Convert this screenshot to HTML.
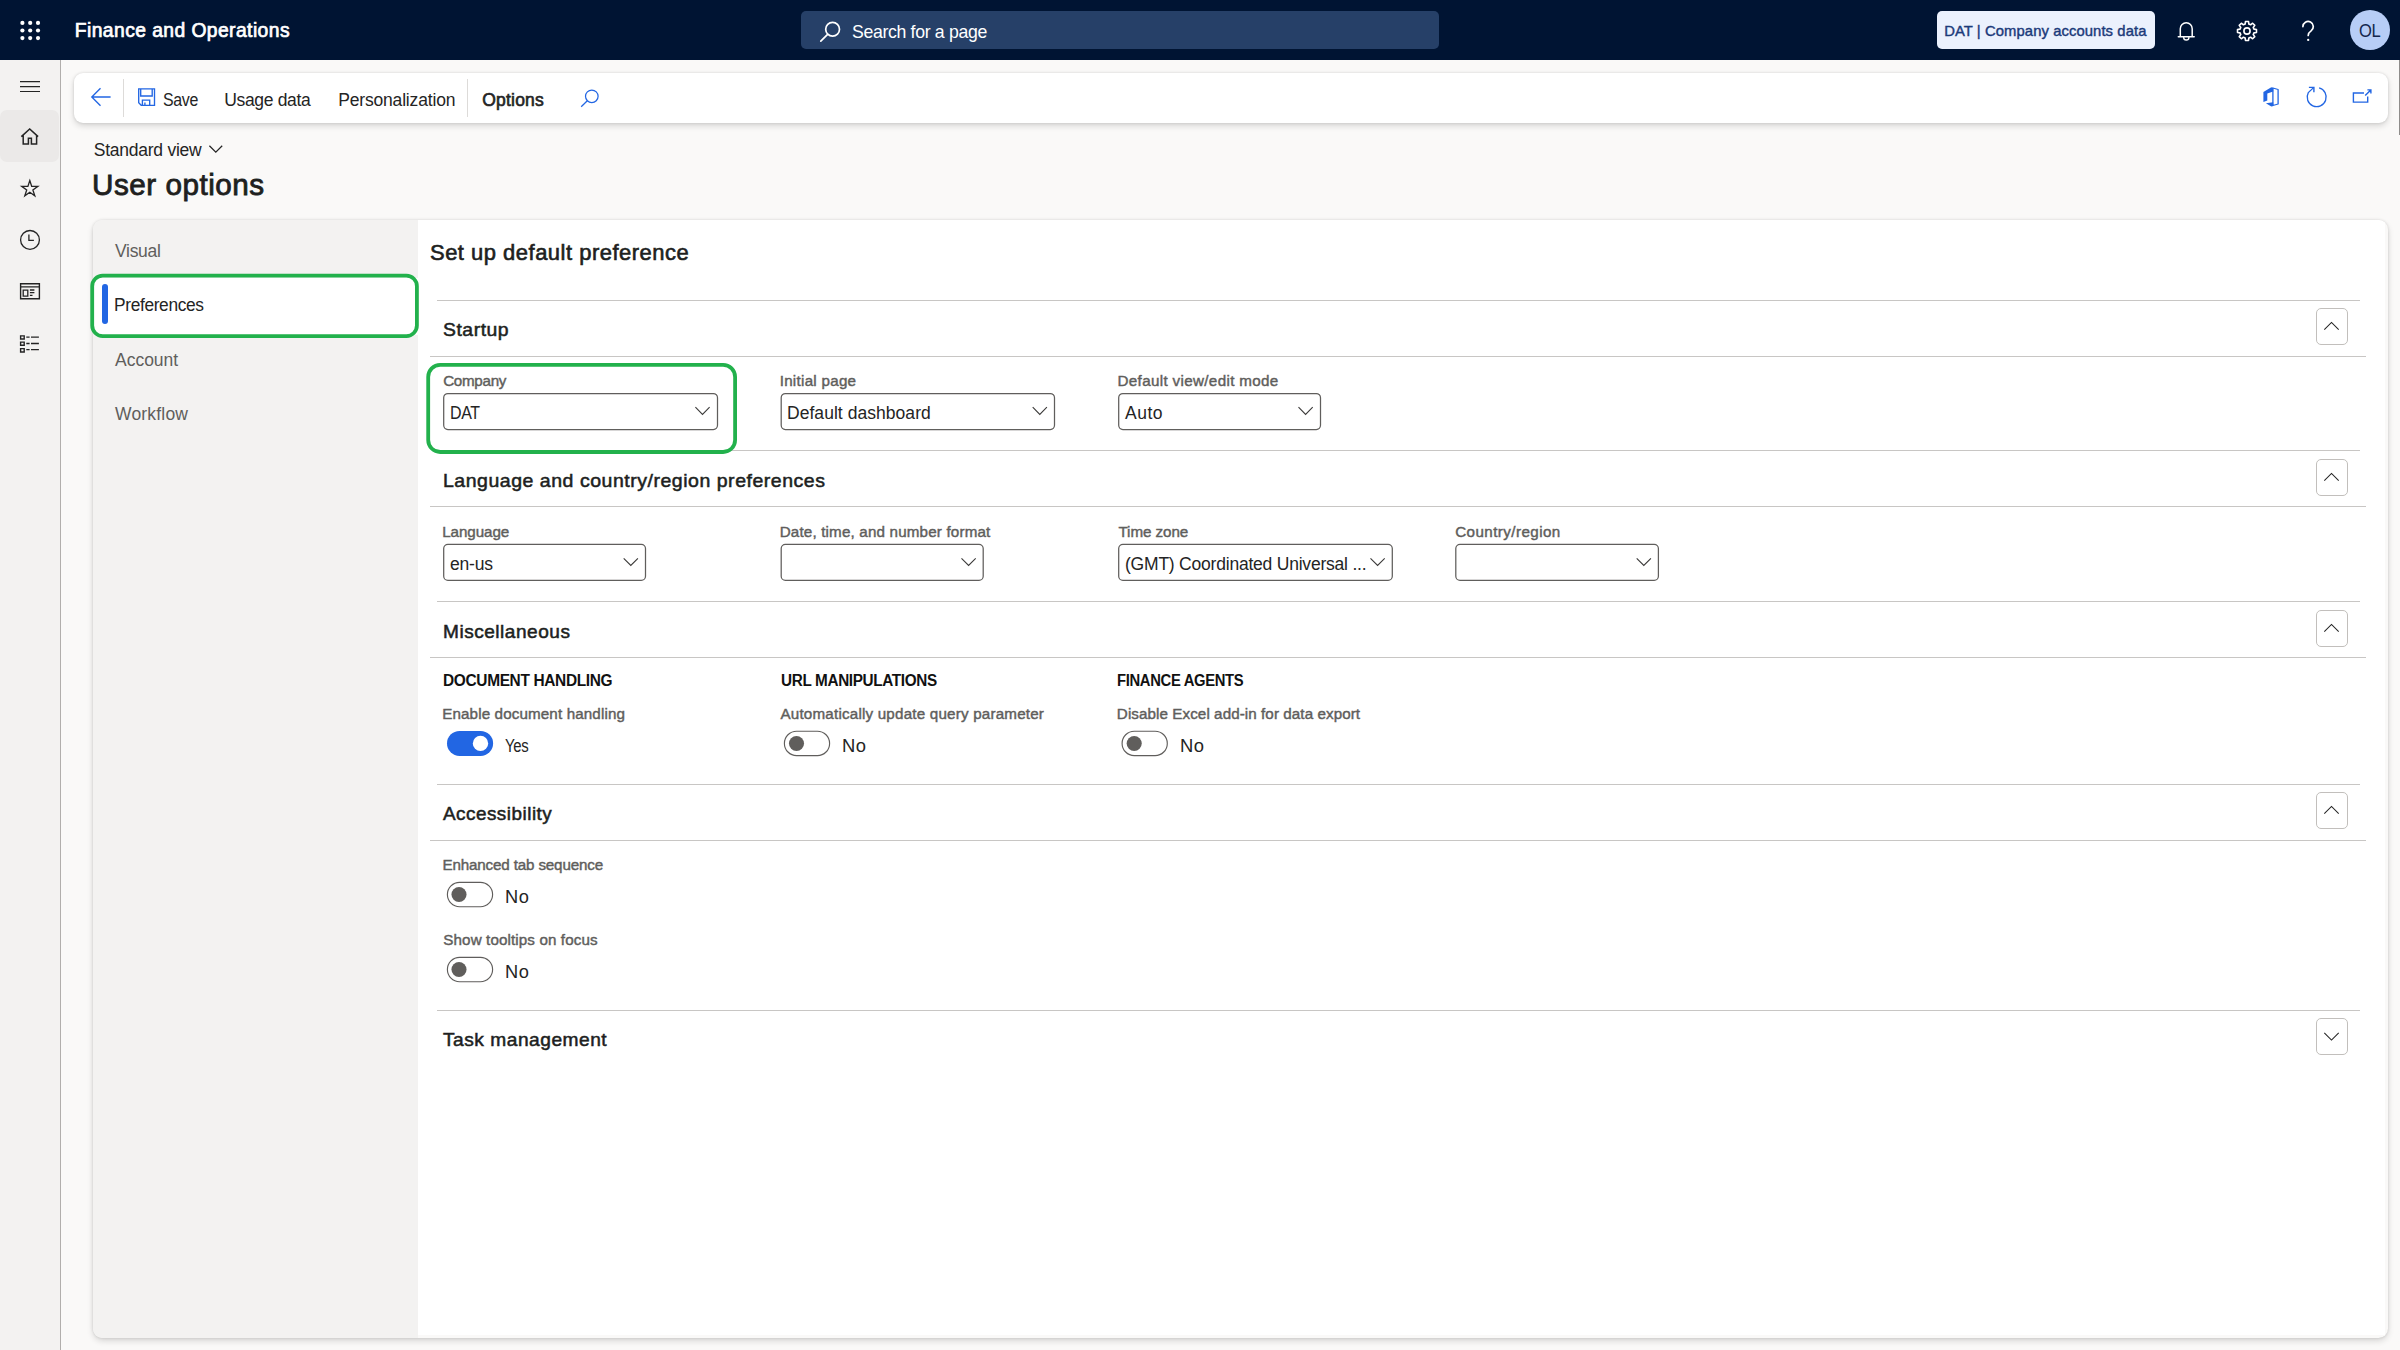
<!DOCTYPE html>
<html lang="en"><head><meta charset="utf-8"><title>User options</title>
<style>
html,body{margin:0;padding:0;}
body{width:2400px;height:1350px;overflow:hidden;position:relative;background:#faf9f8;font-family:"Liberation Sans",sans-serif;}
.t{position:absolute;transform-origin:0 0;white-space:nowrap;line-height:1;font-weight:400;}
.a{position:absolute;box-sizing:border-box;}
svg{position:absolute;overflow:visible;}
.hl{position:absolute;box-sizing:border-box;height:1px;background:#c8c6c4;}
.cbtn{position:absolute;box-sizing:border-box;left:2316px;width:32px;height:37px;border:1px solid #c2bfbc;border-radius:5px;background:#fff;}

</style></head><body>
<!-- ===== top bar ===== -->
<div class="a" style="left:0;top:0;width:2400px;height:60px;background:#001433;"></div>
<svg style="left:0;top:0" width="60" height="60" viewBox="0 0 60 60"><g fill="#fff">
<circle cx="22.4" cy="22.9" r="2.1"/><circle cx="30.2" cy="22.9" r="2.1"/><circle cx="38" cy="22.9" r="2.1"/>
<circle cx="22.4" cy="30.5" r="2.1"/><circle cx="30.2" cy="30.5" r="2.1"/><circle cx="38" cy="30.5" r="2.1"/>
<circle cx="22.4" cy="38.1" r="2.1"/><circle cx="30.2" cy="38.1" r="2.1"/><circle cx="38" cy="38.1" r="2.1"/></g></svg>
<div class="a" style="left:801px;top:11px;width:638px;height:38px;background:#264068;border-radius:5px;"></div>
<svg style="left:818px;top:20px" width="24" height="24" viewBox="818 20 24 24"><g fill="none" stroke="#fff" stroke-width="1.7" stroke-linecap="round">
<circle cx="832.6" cy="29.3" r="6.9"/><path d="M827.6 34.4 L820.8 41.2"/></g></svg>
<div class="a" style="left:1937px;top:11px;width:218px;height:38px;background:#ebf1fd;border-radius:5px;"></div>
<!-- bell -->
<svg style="left:2174px;top:18px" width="24" height="26" viewBox="2174 18 24 26"><g fill="none" stroke="#fff" stroke-width="1.7" stroke-linejoin="round" stroke-linecap="round">
<path d="M2180.3 36.7 V28.7 a5.95 5.95 0 0 1 11.9 0 V36.7 M2178.3 36.8 H2194.2" stroke-width="1.5"/><path d="M2183.7 37.4 a2.6 2.6 0 0 0 5.2 0" stroke-width="1.4"/></g></svg>
<!-- gear -->
<svg style="left:2235px;top:19px" width="24" height="24" viewBox="-12 -12 24 24"><g fill="none" stroke="#fff" stroke-width="1.6" stroke-linejoin="round">
<circle cx="0" cy="0" r="3.1"/>
<path d="M6.96 -1.85 L9.48 -1.53 L9.48 1.53 L6.96 1.85 L6.23 3.61 L7.78 5.62 L5.62 7.78 L3.61 6.23 L1.85 6.96 L1.53 9.48 L-1.53 9.48 L-1.85 6.96 L-3.61 6.23 L-5.62 7.78 L-7.78 5.62 L-6.23 3.61 L-6.96 1.85 L-9.48 1.53 L-9.48 -1.53 L-6.96 -1.85 L-6.23 -3.61 L-7.78 -5.62 L-5.62 -7.78 L-3.61 -6.23 L-1.85 -6.96 L-1.53 -9.48 L1.53 -9.48 L1.85 -6.96 L3.61 -6.23 L5.62 -7.78 L7.78 -5.62 L6.23 -3.61 Z"/></g></svg>
<!-- question -->
<svg style="left:2298px;top:18px" width="20" height="26" viewBox="2298 18 20 26"><g fill="none" stroke="#fff" stroke-width="1.7" stroke-linecap="round">
<path d="M2302.9 26.6 a5.2 5.2 0 1 1 8.2 4.3 c-2 1.4 -2.9 2.3 -2.9 4.6"/></g><circle cx="2308.2" cy="39.9" r="1.15" fill="#fff"/></svg>
<div class="a" style="left:2350px;top:10px;width:40px;height:40px;border-radius:50%;background:#b7cdf6;"></div>

<!-- scroll sliver -->
<div class="a" style="left:2398.6px;top:60px;width:1.4px;height:75px;background:#8f8d8b;"></div>
<!-- ===== left rail ===== -->
<div class="a" style="left:0;top:60px;width:61px;height:1290px;background:#f3f2f1;border-right:1px solid #b1aeac;"></div>
<div class="a" style="left:0;top:110px;width:59px;height:52px;background:#ebe9e8;border-radius:7px;"></div>
<svg style="left:0;top:60px" width="60" height="320" viewBox="0 60 60 320"><g fill="none" stroke="#242424" stroke-width="1.5" stroke-linejoin="miter">
<path d="M20 81.7H40M20 86.6H40M20 91.5H40" stroke-width="1.2"/>
<!-- home -->
<path d="M21.3 136.6 L29.7 128.9 L38.1 136.6 M23.2 135.4 V144 H28.4 V138.2 H31.4 V144 H36.6 V135.4" stroke-width="1.5"/>
<!-- star -->
<path d="M29.80 180.50 L31.71 186.37 L37.88 186.37 L32.89 190.00 L34.80 195.88 L29.80 192.25 L24.80 195.88 L26.71 190.00 L21.72 186.37 L27.89 186.37 Z" stroke-width="1.3"/>
<!-- clock -->
<circle cx="30" cy="239.9" r="9.4" stroke-width="1.3"/><path d="M28.9 234.4 V240.4 H33.9" stroke-width="1.3"/>
<!-- workspace -->
<path d="M20.6 283.8 H39.4 V298.7 H20.6 Z M20.6 286.9 H39.4" stroke-width="1.4"/><path d="M23.2 290.2 h4.6 v6 h-4.6 z M29.9 290 H34.4 M29.9 292.7 H34.4 M29.9 295.4 H32.5" stroke-width="1.3"/>
<!-- list -->
<path d="M20.6 335.9 h3.6 v3.1 h-3.6z M20.6 342.1 h3.6 v3.1 h-3.6z M20.6 348.6 h3.6 v3.4 h-3.6z" stroke-width="1.4"/><path d="M26.3 337.2 H29.6 M31 337.2 H38.9 M26.3 343.5 H29.6 M31 343.5 H38.9 M26.3 349.7 H29.6 M31 349.7 H38.9" stroke-width="1.3"/>
</g></svg>

<!-- ===== action pane ===== -->
<div class="a" style="left:74px;top:73px;width:2314px;height:50px;background:#fff;border-radius:9px;box-shadow:0 0 3px rgba(0,0,0,.12),0 3px 6px rgba(0,0,0,.14);"></div>
<div class="a" style="left:123px;top:79px;width:1px;height:38px;background:#dddbd9;"></div>
<div class="a" style="left:467px;top:79px;width:1px;height:38px;background:#dddbd9;"></div>
<svg style="left:74px;top:73px" width="2314" height="50" viewBox="74 73 2314 50"><g fill="none" stroke="#2266e3" stroke-width="1.5" stroke-linejoin="miter">
<!-- back -->
<path d="M110.6 97 H91.8 M100.5 88.3 L91.8 97 L100.5 105.7" stroke-width="1.35"/>
<!-- save -->
<path d="M138.7 88.9 H154.5 V105.3 H141.2 L138.7 102.8 Z M140.7 88.9 V96 H152.2 V88.9 M142.4 105.3 V100.1 H149.7 V105.3 M144.9 105.3 V102.6" stroke-width="1.35"/>
<!-- search -->
<circle cx="591.8" cy="96.3" r="6.3" stroke-width="1.25"/><path d="M587.3 100.8 L581.2 106.8" stroke-width="1.25"/>
<!-- refresh -->
<path d="M2319.1 87.9 A9.5 9.5 0 1 1 2308.3 92.6 L2313.6 87.6" stroke-width="1.3"/><path d="M2308.9 87.4 H2313.9 V92.3" stroke-width="1.4"/>
<!-- popout -->
<path d="M2364 93 H2353.4 V102.1 H2367.7 V96.4 M2365.2 95.5 L2370.8 89.9 M2367.4 89.9 H2370.9 V93.4" stroke-width="1.4"/>
</g>
<!-- office -->
<path d="M2263.4 92 L2271.3 87.3 L2273.2 87.9 V91.6 L2267.3 93.5 V100.5 L2263.4 102.1 Z M2265.9 103.3 L2273.2 102.2 V106.1 L2271.3 106.6 Z" fill="#2266e3"/><path d="M2272.9 88 L2278.1 89.5 V104 L2272.9 105.5 Z" fill="none" stroke="#2266e3" stroke-width="1.3" stroke-linejoin="round"/>
</svg>

<!-- standard view chevron -->
<svg style="left:205px;top:140px" width="24" height="20" viewBox="205 140 24 20"><path d="M209.4 145.8 L215.8 152.2 L222.2 145.8" fill="none" stroke="#242424" stroke-width="1.25"/></svg>

<!-- ===== card ===== -->
<div class="a" style="left:93px;top:219.6px;width:2295.2px;height:1118.4px;background:#faf9f8;border-radius:9.5px;box-shadow:0 0 3px rgba(0,0,0,.12),0 3px 6px rgba(0,0,0,.14); overflow:hidden;">
  <div class="a" style="left:325px;top:0;width:1967px;height:1115.4px;background:#fff;"></div>
  <div class="a" style="left:0;top:0;width:325px;height:1118.4px;background:#f3f2f1;"></div>
  <div class="a" style="left:0;top:58px;width:325px;height:57px;background:#fff;border-radius:5px 0 0 5px;"></div>
</div>
<div class="a" style="left:102px;top:284px;width:6px;height:40.4px;border-radius:3px;background:#2266e3;"></div>
<svg style="left:0;top:0" width="800" height="500" viewBox="0 0 800 500"><rect x="92.2" y="275.7" width="324.7" height="60.4" rx="10.5" fill="none" stroke="#22b14c" stroke-width="3.8"/></svg>

<!-- section lines -->
<div class="hl" style="left:436.5px;top:300px;width:1923px;"></div>
<div class="hl" style="left:430px;top:356px;width:1936px;"></div>
<div class="hl" style="left:436.5px;top:450px;width:1923px;"></div>
<div class="hl" style="left:430px;top:506px;width:1936px;"></div>
<div class="hl" style="left:436.5px;top:601px;width:1923px;"></div>
<div class="hl" style="left:430px;top:657px;width:1936px;"></div>
<div class="hl" style="left:436.5px;top:784px;width:1923px;"></div>
<div class="hl" style="left:430px;top:840px;width:1936px;"></div>
<div class="hl" style="left:436.5px;top:1010px;width:1923px;"></div>

<!-- collapse buttons -->
<div class="cbtn" style="top:308px;"></div>
<div class="cbtn" style="top:459px;"></div>
<div class="cbtn" style="top:610px;"></div>
<div class="cbtn" style="top:792px;"></div>
<div class="cbtn" style="top:1018px;"></div>
<svg style="left:2316px;top:300px" width="32" height="760" viewBox="2316 300 32 760"><g fill="none" stroke="#242424" stroke-width="1.05">
<path d="M2324.3 329.6 L2331.5 322.4 L2338.7 329.6"/>
<path d="M2324.3 480.6 L2331.5 473.4 L2338.7 480.6"/>
<path d="M2324.3 631.6 L2331.5 624.4 L2338.7 631.6"/>
<path d="M2324.3 813.6 L2331.5 806.4 L2338.7 813.6"/>
<path d="M2324.3 1032.8 L2331.5 1040 L2338.7 1032.8"/>
</g></svg>

<!-- green box around company -->
<svg style="left:0;top:0" width="800" height="500" viewBox="0 0 800 500"><rect x="428.2" y="364.9" width="306.9" height="87.1" rx="12" fill="#fff" stroke="#22b14c" stroke-width="3.8"/></svg>

<!-- inputs -->
<svg style="left:0;top:0" width="2400" height="700" viewBox="0 0 2400 700"><g fill="#fff" stroke="#605e5c" stroke-width="1.25"><rect x="443.7" y="393.5" width="273.8" height="36" rx="4.2"/><rect x="781.2" y="393.5" width="273.3" height="36" rx="4.2"/><rect x="1118.7" y="393.5" width="201.8" height="36" rx="4.2"/><rect x="443.7" y="544.4" width="201.8" height="36" rx="4.2"/><rect x="781.2" y="544.4" width="202.0" height="36" rx="4.2"/><rect x="1118.7" y="544.4" width="273.6" height="36" rx="4.2"/><rect x="1455.8" y="544.4" width="202.6" height="36" rx="4.2"/></g></svg>
<svg style="left:430px;top:390px" width="1300" height="200" viewBox="430 390 1300 200"><g fill="none" stroke="#3b3a39" stroke-width="1.1">
<path d="M695.4 407.2 L702.5 414.4 L709.6 407.2"/><path d="M1032.7 407.2 L1039.8 414.4 L1046.9 407.2"/><path d="M1298.5 407.2 L1305.6 414.4 L1312.7 407.2"/><path d="M623.7 558.3 L630.8 565.5 L637.9 558.3"/><path d="M961.5 558.3 L968.6 565.5 L975.7 558.3"/><path d="M1370.5 558.3 L1377.6 565.5 L1384.7 558.3"/><path d="M1636.7 558.3 L1643.8 565.5 L1650.9 558.3"/>
</g></svg>

<!-- toggles -->
<svg style="left:0;top:0" width="2400" height="1000" viewBox="0 0 2400 1000"><rect x="447.0" y="730.9" width="46.1" height="25.1" rx="12.55" fill="#2266e3"/><circle cx="480.5" cy="743.4" r="7.7" fill="#fff"/><rect x="784.4" y="731.2" width="45.2" height="24.4" rx="12.2" fill="#fff" stroke="#605e5c" stroke-width="1.15"/><circle cx="796.5" cy="743.5" r="7.55" fill="#605e5c"/><rect x="1122.1" y="731.2" width="45.2" height="24.4" rx="12.2" fill="#fff" stroke="#605e5c" stroke-width="1.15"/><circle cx="1134.2" cy="743.5" r="7.55" fill="#605e5c"/><rect x="447.4" y="882.3" width="45.2" height="24.4" rx="12.2" fill="#fff" stroke="#605e5c" stroke-width="1.15"/><circle cx="459.0" cy="894.5" r="7.55" fill="#605e5c"/><rect x="447.4" y="957.3" width="45.2" height="24.4" rx="12.2" fill="#fff" stroke="#605e5c" stroke-width="1.15"/><circle cx="459.0" cy="969.5" r="7.55" fill="#605e5c"/></svg>

<span class="t" style="left:74.78px;top:21.00px;font-size:19.3px;color:#ffffff;-webkit-text-stroke:0.7px #ffffff;letter-spacing:0.428px;">Finance and Operations</span>
<span class="t" style="left:851.70px;top:23.00px;font-size:18.5px;color:#ffffff;letter-spacing:-0.350px;transform:scaleX(0.9562);">Search for a page</span>
<span class="t" style="left:1944.16px;top:24.00px;font-size:14.8px;color:#1b3a7a;-webkit-text-stroke:0.41px #1b3a7a;letter-spacing:0.091px;">DAT | Company accounts data</span>
<span class="t" style="left:2359.00px;top:23.00px;font-size:17.5px;color:#14264d;letter-spacing:-0.350px;transform:scaleX(0.9457);">OL</span>
<span class="t" style="left:162.50px;top:92.00px;font-size:17.5px;color:#242424;letter-spacing:-0.350px;transform:scaleX(0.9106);">Save</span>
<span class="t" style="left:224.30px;top:92.00px;font-size:17.5px;color:#242424;letter-spacing:-0.350px;">Usage data</span>
<span class="t" style="left:338.20px;top:92.00px;font-size:17.5px;color:#242424;letter-spacing:-0.173px;">Personalization</span>
<span class="t" style="left:482.25px;top:92.00px;font-size:17.5px;color:#242424;-webkit-text-stroke:0.62px #242424;letter-spacing:0.207px;">Options</span>
<span class="t" style="left:93.80px;top:142.00px;font-size:17.5px;color:#242424;letter-spacing:-0.255px;">Standard view</span>
<span class="t" style="left:92.19px;top:171.00px;font-size:29.0px;color:#201f1e;-webkit-text-stroke:0.81px #201f1e;letter-spacing:0.500px;transform:scaleX(1.0225);">User options</span>
<span class="t" style="left:115.00px;top:243.00px;font-size:17.5px;color:#605e5c;letter-spacing:-0.292px;">Visual</span>
<span class="t" style="left:114.01px;top:297.00px;font-size:17.5px;color:#242424;letter-spacing:-0.350px;transform:scaleX(0.9900);">Preferences</span>
<span class="t" style="left:115.00px;top:352.00px;font-size:17.5px;color:#605e5c;letter-spacing:-0.012px;">Account</span>
<span class="t" style="left:115.00px;top:406.00px;font-size:17.5px;color:#605e5c;letter-spacing:0.187px;">Workflow</span>
<span class="t" style="left:430.15px;top:243.00px;font-size:21.3px;color:#201f1e;-webkit-text-stroke:0.6px #201f1e;letter-spacing:0.500px;transform:scaleX(1.0299);">Set up default preference</span>
<span class="t" style="left:443.32px;top:321.00px;font-size:18.4px;color:#201f1e;-webkit-text-stroke:0.52px #201f1e;letter-spacing:0.500px;transform:scaleX(1.0531);">Startup</span>
<span class="t" style="left:443.06px;top:472.00px;font-size:18.4px;color:#201f1e;-webkit-text-stroke:0.52px #201f1e;letter-spacing:0.500px;transform:scaleX(1.0595);">Language and country/region preferences</span>
<span class="t" style="left:443.08px;top:623.00px;font-size:18.4px;color:#201f1e;-webkit-text-stroke:0.52px #201f1e;letter-spacing:0.500px;transform:scaleX(1.0357);">Miscellaneous</span>
<span class="t" style="left:442.91px;top:805.00px;font-size:18.4px;color:#201f1e;-webkit-text-stroke:0.52px #201f1e;letter-spacing:0.500px;transform:scaleX(1.0245);">Accessibility</span>
<span class="t" style="left:442.92px;top:1031.00px;font-size:18.4px;color:#201f1e;-webkit-text-stroke:0.52px #201f1e;letter-spacing:0.500px;transform:scaleX(1.0408);">Task management</span>
<span class="t" style="left:443.17px;top:373.00px;font-size:15.2px;color:#605e5c;-webkit-text-stroke:0.43px #605e5c;letter-spacing:-0.292px;">Company</span>
<span class="t" style="left:779.67px;top:373.00px;font-size:15.2px;color:#605e5c;-webkit-text-stroke:0.43px #605e5c;letter-spacing:0.267px;">Initial page</span>
<span class="t" style="left:1117.47px;top:373.00px;font-size:15.2px;color:#605e5c;-webkit-text-stroke:0.43px #605e5c;letter-spacing:0.341px;">Default view/edit mode</span>
<span class="t" style="left:442.17px;top:524.00px;font-size:15.2px;color:#605e5c;-webkit-text-stroke:0.43px #605e5c;letter-spacing:-0.067px;">Language</span>
<span class="t" style="left:779.67px;top:524.00px;font-size:15.2px;color:#605e5c;-webkit-text-stroke:0.43px #605e5c;letter-spacing:0.168px;">Date, time, and number format</span>
<span class="t" style="left:1118.47px;top:524.00px;font-size:15.2px;color:#605e5c;-webkit-text-stroke:0.43px #605e5c;letter-spacing:-0.067px;">Time zone</span>
<span class="t" style="left:1455.17px;top:524.00px;font-size:15.2px;color:#605e5c;-webkit-text-stroke:0.43px #605e5c;letter-spacing:0.422px;">Country/region</span>
<span class="t" style="left:449.89px;top:405.00px;font-size:17.5px;color:#242424;letter-spacing:-0.350px;transform:scaleX(0.9130);">DAT</span>
<span class="t" style="left:787.00px;top:405.00px;font-size:17.5px;color:#242424;letter-spacing:0.045px;">Default dashboard</span>
<span class="t" style="left:1125.00px;top:405.00px;font-size:17.5px;color:#242424;letter-spacing:0.500px;">Auto</span>
<span class="t" style="left:450.00px;top:556.00px;font-size:17.5px;color:#242424;letter-spacing:-0.181px;">en-us</span>
<span class="t" style="left:1125.00px;top:556.00px;font-size:17.5px;color:#242424;letter-spacing:-0.214px;">(GMT) Coordinated Universal ...</span>
<span class="t" style="left:442.51px;top:673.00px;font-size:15.6px;color:#111111;font-weight:700;letter-spacing:-0.350px;transform:scaleX(0.9913);">DOCUMENT HANDLING</span>
<span class="t" style="left:780.80px;top:673.00px;font-size:15.6px;color:#111111;font-weight:700;letter-spacing:-0.350px;transform:scaleX(0.9807);">URL MANIPULATIONS</span>
<span class="t" style="left:1117.35px;top:673.00px;font-size:15.6px;color:#111111;font-weight:700;letter-spacing:-0.350px;transform:scaleX(0.9490);">FINANCE AGENTS</span>
<span class="t" style="left:442.17px;top:706.00px;font-size:15.2px;color:#605e5c;-webkit-text-stroke:0.43px #605e5c;letter-spacing:0.128px;">Enable document handling</span>
<span class="t" style="left:780.47px;top:706.00px;font-size:15.2px;color:#605e5c;-webkit-text-stroke:0.43px #605e5c;letter-spacing:0.194px;">Automatically update query parameter</span>
<span class="t" style="left:1116.87px;top:706.00px;font-size:15.2px;color:#605e5c;-webkit-text-stroke:0.43px #605e5c;letter-spacing:0.074px;">Disable Excel add-in for data export</span>
<span class="t" style="left:442.47px;top:857.00px;font-size:15.2px;color:#605e5c;-webkit-text-stroke:0.43px #605e5c;letter-spacing:-0.156px;">Enhanced tab sequence</span>
<span class="t" style="left:443.27px;top:932.00px;font-size:15.2px;color:#605e5c;-webkit-text-stroke:0.43px #605e5c;letter-spacing:0.114px;">Show tooltips on focus</span>
<span class="t" style="left:505.30px;top:738.00px;font-size:17.5px;color:#242424;letter-spacing:-0.350px;transform:scaleX(0.8506);">Yes</span>
<span class="t" style="left:842.35px;top:738.00px;font-size:17.5px;color:#242424;letter-spacing:0.500px;transform:scaleX(1.0502);">No</span>
<span class="t" style="left:1179.95px;top:738.00px;font-size:17.5px;color:#242424;letter-spacing:0.500px;transform:scaleX(1.0502);">No</span>
<span class="t" style="left:504.86px;top:889.00px;font-size:17.5px;color:#242424;letter-spacing:0.500px;transform:scaleX(1.0408);">No</span>
<span class="t" style="left:504.86px;top:964.00px;font-size:17.5px;color:#242424;letter-spacing:0.500px;transform:scaleX(1.0408);">No</span>
</body></html>
